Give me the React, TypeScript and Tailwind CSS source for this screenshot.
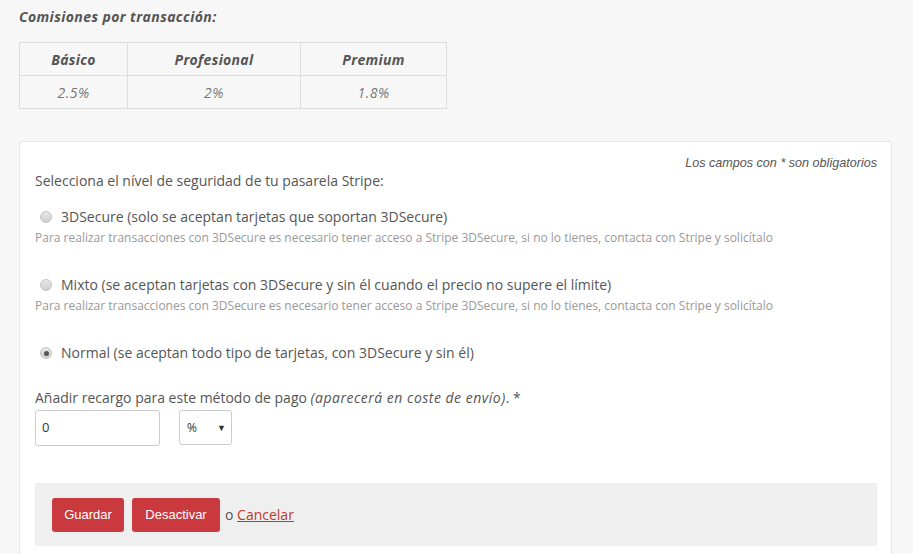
import React from 'react';

const options = [
  {
    label: '3DSecure (solo se aceptan tarjetas que soportan 3DSecure)',
    help: 'Para realizar transacciones con 3DSecure es necesario tener acceso a Stripe 3DSecure, si no lo tienes, contacta con Stripe y solicítalo',
    checked: false,
  },
  {
    label: 'Mixto (se aceptan tarjetas con 3DSecure y sin él cuando el precio no supere el límite)',
    help: 'Para realizar transacciones con 3DSecure es necesario tener acceso a Stripe 3DSecure, si no lo tienes, contacta con Stripe y solicítalo',
    checked: false,
  },
  {
    label: 'Normal (se aceptan todo tipo de tarjetas, con 3DSecure y sin él)',
    help: null,
    checked: true,
  },
];

function Radio({ checked }: { checked: boolean }) {
  return (
    <span className="w-[12px] h-[12px] rounded-full border border-[#c4c4c4] bg-gradient-to-b from-[#e6e6e6] to-[#cfcfcf] flex items-center justify-center shrink-0">
      {checked && <span className="w-[5px] h-[5px] rounded-full bg-[#555]" />}
    </span>
  );
}

export default function App() {
  return (
    <div className="bg-[#f7f7f7] min-h-screen px-[19px] pb-10 text-[#555] font-['Open_Sans',sans-serif]">
      {/* Comisiones */}
      <div className="pt-[7px] text-[14px] leading-[20px] font-bold italic tracking-[0.4px]">Comisiones por transacción:</div>
      <table className="mt-[15px] border-collapse w-[428px] text-center">
        <thead>
          <tr className="h-[33px] tracking-[0.3px]">
            <th className="border border-[#dedede] w-[108px] text-[14px] font-bold italic">Básico</th>
            <th className="border border-[#dedede] w-[173px] text-[14px] font-bold italic">Profesional</th>
            <th className="border border-[#dedede] text-[14px] font-bold italic">Premium</th>
          </tr>
        </thead>
        <tbody>
          <tr className="h-[33px] text-[14px] italic text-[#777] tracking-[0.5px]">
            <td className="border border-[#dedede]">2.5%</td>
            <td className="border border-[#dedede]">2%</td>
            <td className="border border-[#dedede]">1.8%</td>
          </tr>
        </tbody>
      </table>

      {/* Form card */}
      <div className="mt-[32px] w-[873px] bg-white border border-[#e6e6e6] rounded-[3px] pt-[13px] pl-[15px] pr-[14px] pb-10">
        <div className="text-right text-[12.6px] leading-[16px] italic text-[#555] font-['Liberation_Sans',Arial,sans-serif]">
          Los campos con * son obligatorios
        </div>
        <div className="text-[14px] leading-[20px]">Selecciona el nível de seguridad de tu pasarela Stripe:</div>

        {options.map((o, i) => (
          <div key={i} className={i === 0 ? 'mt-[16px]' : 'mt-[29px]'}>
            <label className="flex items-center gap-[9px] pl-[5px] text-[14px] leading-[20px]">
              <Radio checked={o.checked} />
              <span>{o.label}</span>
            </label>
            {o.help && (
              <div className="mt-[2px] text-[12px] leading-[17px] text-[#999]">{o.help}</div>
            )}
          </div>
        ))}

        <div className="mt-[25px] text-[14px] leading-[20px]">
          Añadir recargo para este método de pago <i className="tracking-[0.5px]">(aparecerá en coste de envío)</i>. *
        </div>
        <div className="mt-[2px] flex items-start gap-[19px]">
          <div className="w-[125px] h-[36px] border border-[#ccc] rounded-[3px] flex items-center px-[6px] text-[13px] text-[#333]">
            0
          </div>
          <div className="w-[53px] h-[35px] border border-[#ccc] rounded-[3px] flex items-center justify-between pl-[7px] pr-[5px] text-[12px] text-[#333]">
            <span>%</span>
            <span className="text-[9px]">▼</span>
          </div>
        </div>

        <div className="mt-[37px] h-[63px] bg-[#efefef] flex items-center pl-[17px] gap-[8px] font-['Liberation_Sans',Arial,sans-serif]">
          <button className="w-[72px] h-[34px] bg-[#c9393e] text-white text-[13px] rounded-[3px]">Guardar</button>
          <button className="w-[88px] h-[34px] bg-[#c9393e] text-white text-[13px] rounded-[3px]">Desactivar</button>
          <span className="text-[14px] text-[#555] font-['Open_Sans',sans-serif] -ml-[3px]">
            o <a href="#" className="text-[#c0392b] underline">Cancelar</a>
          </span>
        </div>
      </div>
    </div>
  );
}
